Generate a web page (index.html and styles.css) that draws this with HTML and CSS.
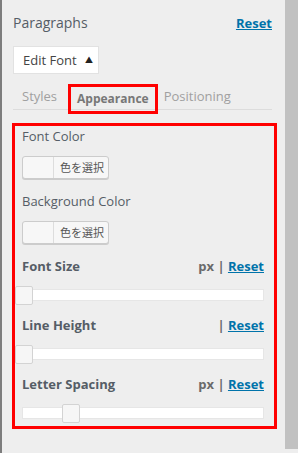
FILE: index.html
```html
<!DOCTYPE html>
<html lang="en">
<head>
    <meta charset="UTF-8">
    <meta name="viewport" content="width=device-width, initial-scale=1.0">
    <title>Paragraphs</title>
    <link rel="stylesheet" href="styles.css">
</head>
<body>
    <div class="edge"></div>
    <div class="panel">
        <div class="panel-head">
            <span class="panel-title">Paragraphs</span>
            <a href="#" class="reset">Reset</a>
        </div>

        <button class="edit-font">Edit Font <span class="caret">&#9650;</span></button>

        <div class="tabs">
            <span class="tab">Styles</span>
            <span class="tab active">Appearance</span>
            <span class="tab">Positioning</span>
        </div>

        <div class="settings">
            <div class="label-row">Font Color</div>
            <div class="color-btn">
                <span class="swatch"></span>
                <span class="pick">色を選択</span>
            </div>

            <div class="label-row">Background Color</div>
            <div class="color-btn">
                <span class="swatch"></span>
                <span class="pick">色を選択</span>
            </div>

            <div class="label-row bold">
                <span>Font Size</span>
                <span class="unit">px | <a href="#" class="reset">Reset</a></span>
            </div>
            <div class="slider">
                <div class="track"></div>
                <span class="handle" style="left: 0%"></span>
            </div>

            <div class="label-row bold">
                <span>Line Height</span>
                <span class="unit">| <a href="#" class="reset">Reset</a></span>
            </div>
            <div class="slider">
                <div class="track"></div>
                <span class="handle" style="left: 0%"></span>
            </div>

            <div class="label-row bold">
                <span>Letter Spacing</span>
                <span class="unit">px | <a href="#" class="reset">Reset</a></span>
            </div>
            <div class="slider">
                <div class="track"></div>
                <span class="handle" style="left: 19.5%"></span>
            </div>
        </div>
    </div>
    <div class="scrollbar"></div>
</body>
</html>
```

FILE: styles.css
```css
body {
    margin: 0;
    height: 453px;
    display: flex;
    align-items: flex-start;
    background-color: #eeeeee;
    font-family: "Open Sans", "Noto Sans CJK JP", sans-serif;
    font-size: 13px;
    color: #555d66;
    overflow: hidden;
}
.edge {
    width: 2px;
    height: 453px;
    background-color: #7d7d7d;
}
.panel {
    flex: 1;
    padding: 13px 8px 0 11px;
}
.panel-head {
    display: flex;
    justify-content: space-between;
    align-items: baseline;
    line-height: 20px;
    margin-right: 5px;
}
.panel-title {
    font-size: 14px;
}
.reset {
    color: #0073aa;
    font-weight: bold;
    text-decoration: underline;
}
.edit-font {
    display: block;
    margin-top: 13px;
    width: 86px;
    height: 28px;
    padding: 0 0 0 9px;
    text-align: left;
    background-color: #ffffff;
    border: 1px solid #e2e2e2;
    font-family: inherit;
    font-size: 13px;
    color: #444444;
    white-space: nowrap;
}
.caret {
    font-size: 8px;
    margin-left: 5px;
    vertical-align: 2px;
    color: #222;
}
.tabs {
    display: flex;
    align-items: center;
    height: 26px;
    margin-top: 9px;
    margin-right: 5px;
    border-bottom: 1px solid #dcdcdc;
}
.tab {
    padding: 0 0 0 9px;
    color: #a0a0a0;
}
.tab.active {
    height: 24px;
    line-height: 24px;
    padding: 0 6px;
    margin: 0 6px -6px 11px;
    border: 3px solid #ff0000;
    font-size: 12px;
    font-weight: bold;
    color: #777777;
}
.tab.active + .tab {
    padding-left: 0;
}
.settings {
    margin: 13px 0 0 -1px;
    border: 3px solid #ff0000;
    padding: 0 10px 4px 7px;
}
.label-row {
    display: flex;
    justify-content: space-between;
    line-height: 20px;
}
.label-row.bold {
    font-weight: bold;
    margin-top: 11px;
}
.unit {
    color: #6a6a6a;
}
.color-btn {
    display: flex;
    width: 85px;
    height: 21px;
    margin: 10px 0 12px;
    border: 1px solid #cccccc;
    border-radius: 3px;
    background-color: #f7f7f7;
    box-shadow: 0 1px 0 #cccccc;
    font-size: 11px;
    color: #555555;
    white-space: nowrap;
}
.swatch {
    width: 30px;
    border-right: 1px solid #dddddd;
}
.pick {
    padding-left: 6px;
    line-height: 21px;
}
.slider {
    position: relative;
    height: 18px;
    margin: 10px 0 11px;
}
.slider:last-child {
    margin-bottom: 0;
}
.track {
    position: relative;
    top: 3px;
    height: 10px;
    background-color: #ffffff;
    border: 1px solid #e6e6e6;
}
.handle {
    position: absolute;
    top: 0;
    width: 16px;
    height: 17px;
    margin-left: -7px;
    background-color: #f6f6f6;
    border: 1px solid #d3d3d3;
    border-radius: 2px;
}
.scrollbar {
    width: 13px;
    height: 449px;
    margin-left: auto;
    background-color: #c1c1c1;
}
```
